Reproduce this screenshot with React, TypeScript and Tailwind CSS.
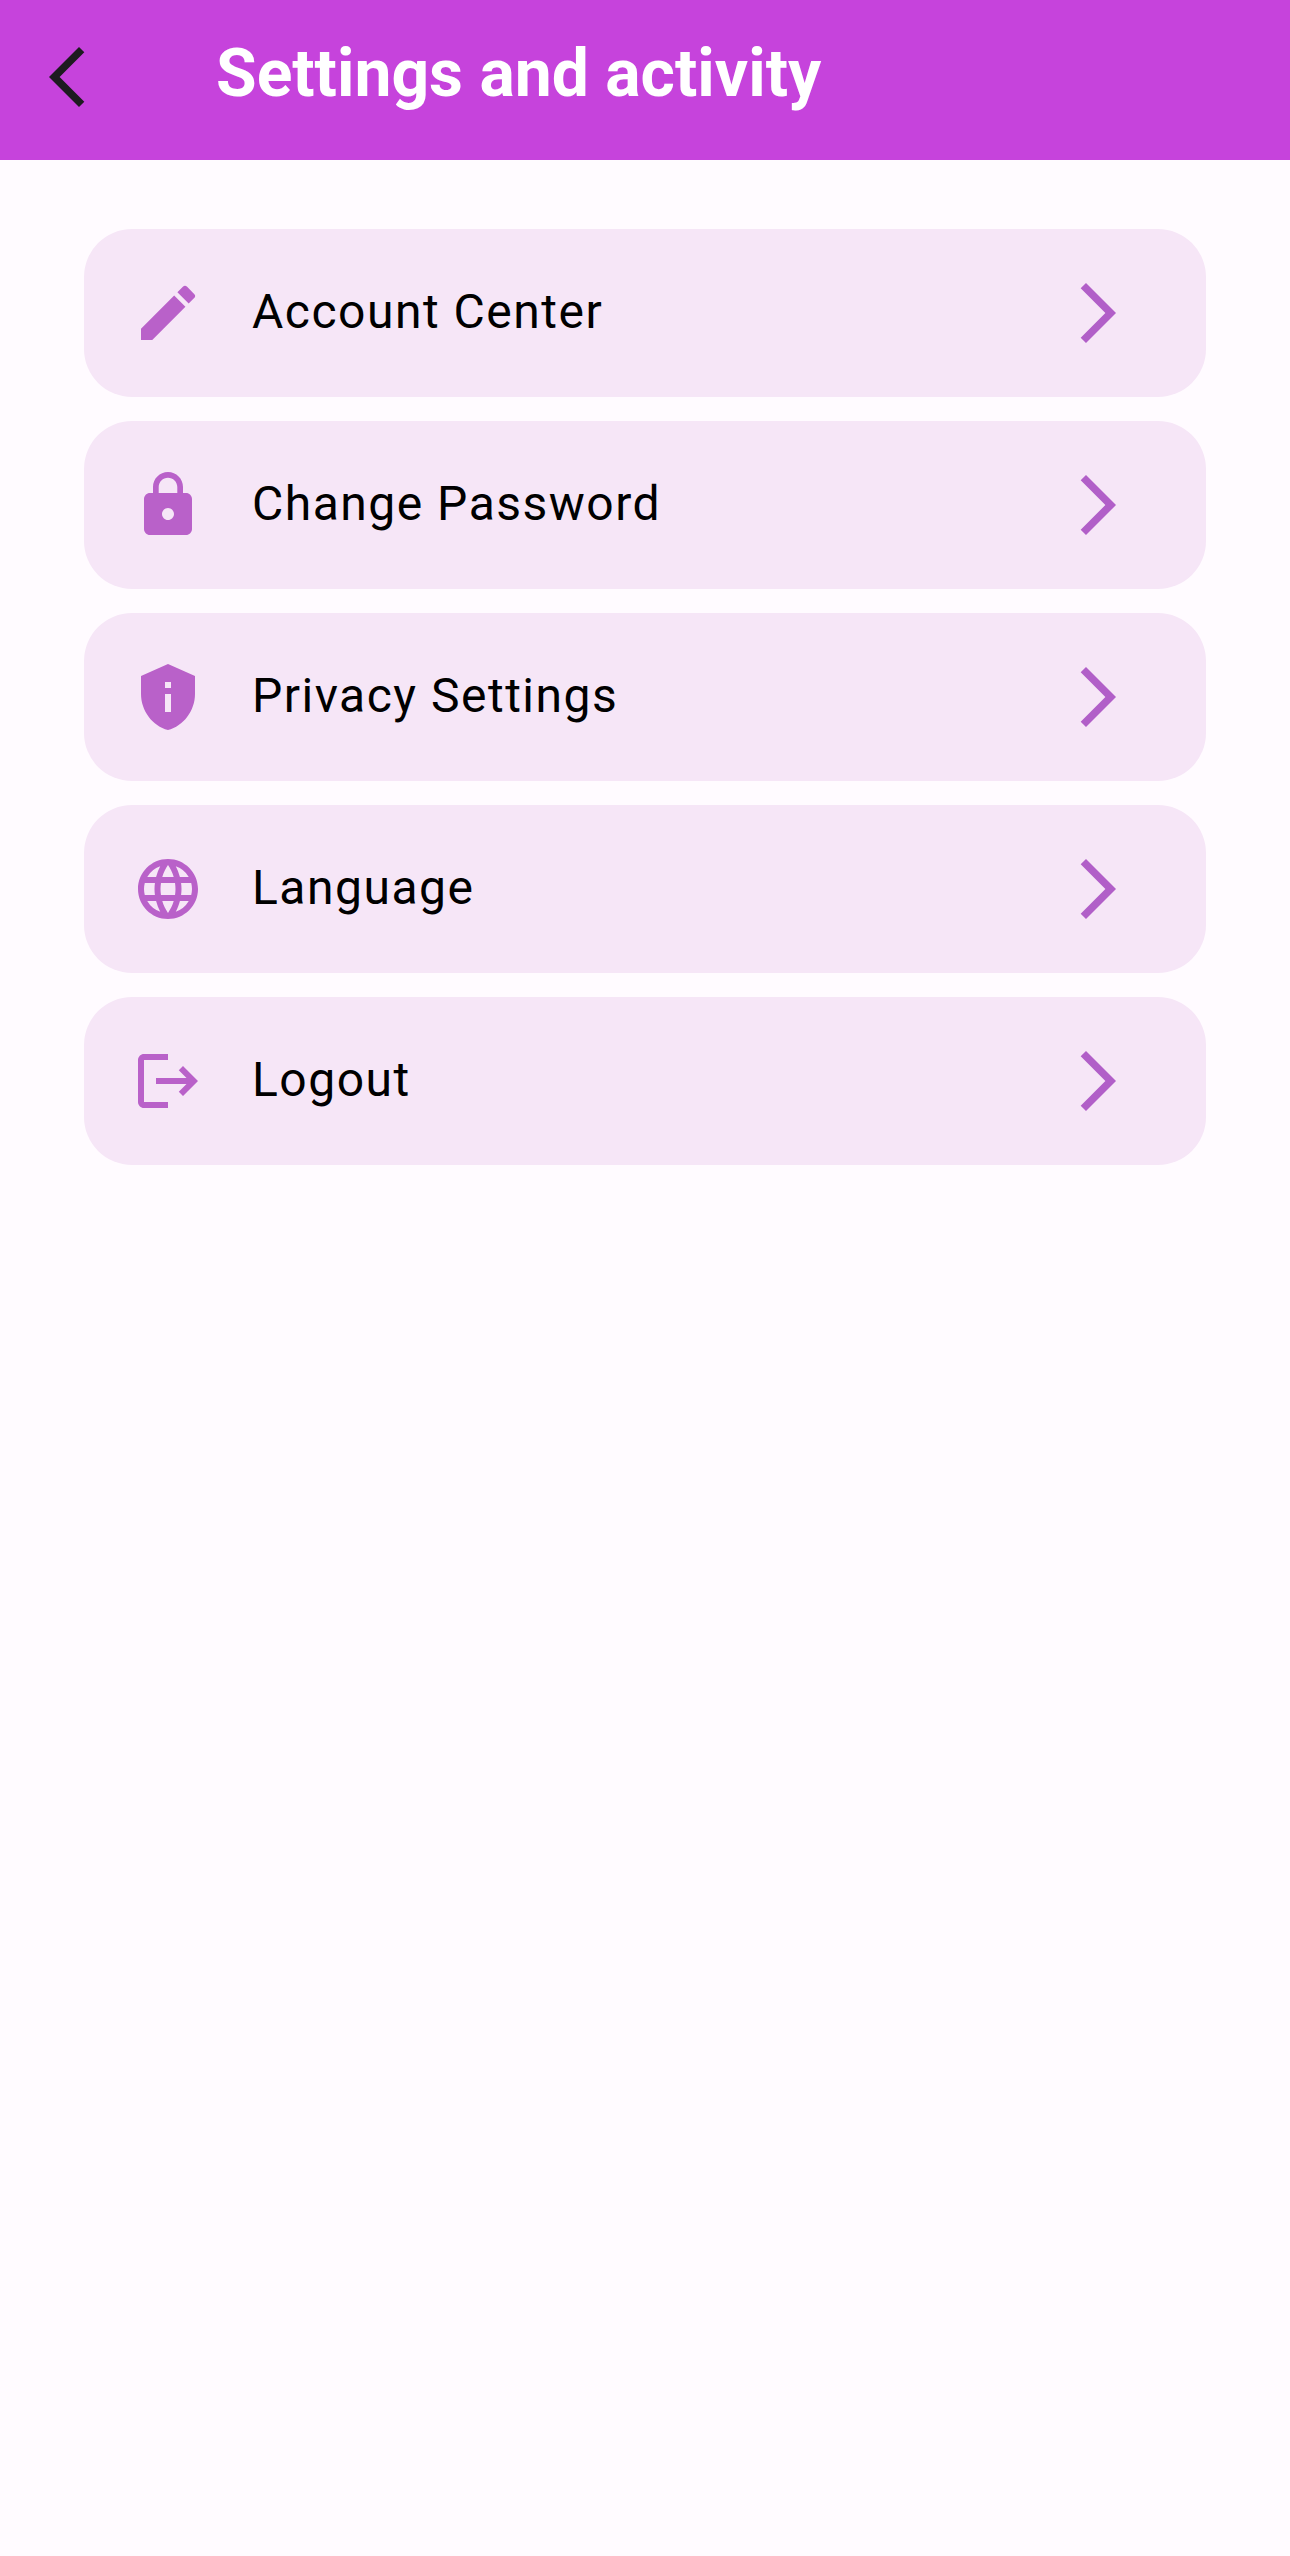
import type { IconType } from 'react-icons'
import { MdArrowBackIosNew, MdArrowForwardIos, MdEdit, MdLanguage, MdLock, MdLogout, MdPrivacyTip } from 'react-icons/md'

interface SettingsItem {
  label: string
  icon: IconType
}

const items: SettingsItem[] = [
  { label: 'Account Center', icon: MdEdit },
  { label: 'Change Password', icon: MdLock },
  { label: 'Privacy Settings', icon: MdPrivacyTip },
  { label: 'Language', icon: MdLanguage },
  { label: 'Logout', icon: MdLogout },
]

function SettingsRow({ label, icon: Icon }: SettingsItem) {
  return (
    <div className="h-[168px] rounded-[48px] bg-[#f6e6f7] pl-[48px] pr-[72px] flex items-center">
      <Icon className="w-[72px] h-[72px] text-[#b961c9] shrink-0" />
      <span className="ml-[48px] mb-[2px] flex-1 text-[48px] leading-none tracking-[1.5px] text-black">{label}</span>
      <MdArrowForwardIos className="w-[72px] h-[72px] text-[#b15fc8] shrink-0" />
    </div>
  )
}

export default function App() {
  return (
    <div className="min-h-[2556px] bg-[#fffbff] font-['Roboto',sans-serif]">
      <header className="h-[160px] bg-[#c643dc] flex items-start">
        <MdArrowBackIosNew className="w-[72px] h-[72px] mt-[41px] ml-[31px] text-[#1d1b20] shrink-0" />
        <h1 className="ml-[113px] mt-[36px] text-[66px] leading-[76px] font-bold text-white">Settings and activity</h1>
      </header>
      <main className="px-[84px] pt-[69px] flex flex-col gap-[24px]">
        {items.map((item) => (
          <SettingsRow key={item.label} {...item} />
        ))}
      </main>
    </div>
  )
}
